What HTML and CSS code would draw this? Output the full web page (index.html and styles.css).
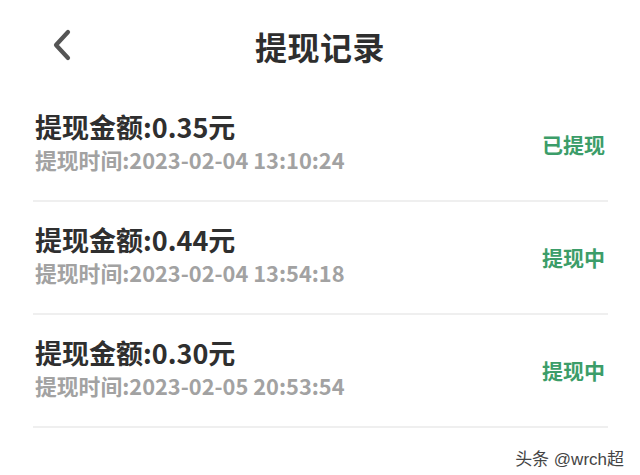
FILE: index.html
```html
<!DOCTYPE html>
<html lang="zh">
<head>
<meta charset="utf-8">
<link rel="stylesheet" href="styles.css">
</head>
<body>
<div class="page">
  <header class="nav">
    <svg class="back" width="20" height="32" viewBox="0 0 20 32"><path d="M16 3 L4 16 L16 29" fill="none" stroke="#555" stroke-width="4.2" stroke-linecap="round" stroke-linejoin="round"/></svg>
    <h1 class="title">提现记录</h1>
  </header>
  <ul class="list">
    <li class="item">
      <div class="info">
        <div class="amount">提现金额:0.35元</div>
        <div class="time">提现时间:2023-02-04 13:10:24</div>
      </div>
      <div class="status">已提现</div>
    </li>
    <li class="item">
      <div class="info">
        <div class="amount">提现金额:0.44元</div>
        <div class="time">提现时间:2023-02-04 13:54:18</div>
      </div>
      <div class="status">提现中</div>
    </li>
    <li class="item">
      <div class="info">
        <div class="amount">提现金额:0.30元</div>
        <div class="time">提现时间:2023-02-05 20:53:54</div>
      </div>
      <div class="status">提现中</div>
    </li>
  </ul>
  <div class="mark">头条 @wrch超</div>
</div>
</body>
</html>
```
FILE: styles.css
```css
* { box-sizing: border-box; }
html, body { margin: 0; padding: 0; background: #fff; }
body { font-family: "Noto Sans CJK SC", "Noto Sans", sans-serif; width: 640px; height: 475px; overflow: hidden; }
.page { position: relative; width: 640px; height: 475px; }
.nav { position: relative; height: 89px; display: flex; align-items: center; justify-content: center; }
.back { position: absolute; left: 52px; top: 29px; }
.title { margin: 0; font-size: 32px; font-weight: 700; color: #2e2e2e; line-height: 1; margin-top: 2px; letter-spacing: 0.5px; }
.list { list-style: none; margin: 0; padding: 0 32px 0 33px; }
.item { display: flex; align-items: center; justify-content: space-between; height: 113px; border-bottom: 2px solid #efefef; padding: 0 0 4px 2px; }
.info { display: flex; flex-direction: column; gap: 4px; }
.amount { font-size: 27px; font-weight: 700; color: #2f2f2f; line-height: 31px; }
.time { font-size: 21.8px; font-weight: 700; color: #a2a2a2; line-height: 28px; }
.status { font-size: 21px; font-weight: 700; color: #3c9d69; margin-right: 3px; padding-top: 2px; }
.mark { position: absolute; right: 16px; bottom: 5px; font-size: 17px; color: #444; font-family: "Liberation Sans", "Noto Sans CJK SC", sans-serif; text-shadow: 0 0 2px #fff, 0 0 2px #fff; }
```
